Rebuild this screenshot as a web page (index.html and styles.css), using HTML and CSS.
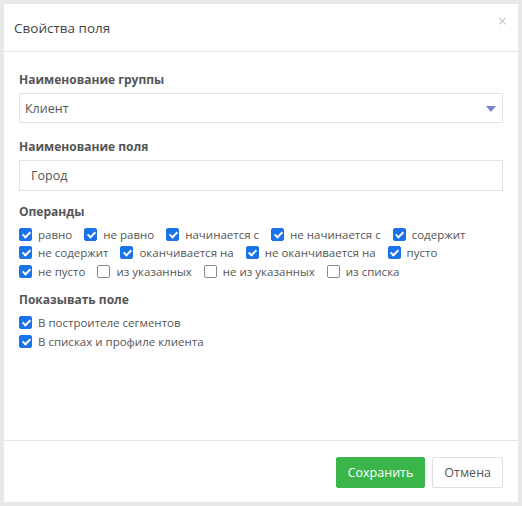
FILE: index.html
```html
<!DOCTYPE html>
<html lang="ru">
<head>
<meta charset="utf-8">
<link rel="stylesheet" href="styles.css">
</head>
<body>
<div class="dialog">
  <div class="header">
    <span class="title">Свойства поля</span>
    <span class="close">×</span>
  </div>
  <div class="body">
    <div class="label">Наименование группы</div>
    <div class="select">
      <span>Клиент</span>
      <svg class="caret" width="10" height="6" viewBox="0 0 10 6"><path d="M0 0H10L5 6Z" fill="#7b82d6"/></svg>
    </div>
    <div class="label">Наименование поля</div>
    <div class="input">Город</div>
    <div class="label">Операнды</div>
    <div class="checks">
      <label class="check"><span class="box on"></span>равно</label>
      <label class="check"><span class="box on"></span>не равно</label>
      <label class="check"><span class="box on"></span>начинается с</label>
      <label class="check"><span class="box on"></span>не начинается с</label>
      <label class="check"><span class="box on"></span>содержит</label>
      <label class="check"><span class="box on"></span>не содержит</label>
      <label class="check"><span class="box on"></span>оканчивается на</label>
      <label class="check"><span class="box on"></span>не оканчивается на</label>
      <label class="check"><span class="box on"></span>пусто</label>
      <label class="check"><span class="box on"></span>не пусто</label>
      <label class="check"><span class="box"></span>из указанных</label>
      <label class="check"><span class="box"></span>не из указанных</label>
      <label class="check"><span class="box"></span>из списка</label>
    </div>
    <div class="label show">Показывать поле</div>
    <div class="checks column">
      <label class="check"><span class="box on"></span>В построителе сегментов</label>
      <label class="check"><span class="box on"></span>В списках и профиле клиента</label>
    </div>
  </div>
  <div class="footer">
    <button class="btn save">Сохранить</button>
    <button class="btn cancel">Отмена</button>
  </div>
</div>
</body>
</html>
```
FILE: styles.css
```css
html, body {
  margin: 0;
  padding: 0;
}
body {
  background: #e8e8e8;
  font-family: "Open Sans", "Liberation Sans", sans-serif;
  color: #555;
  padding: 4px 4px 4px 4px;
  height: 506px;
  box-sizing: border-box;
}
.dialog {
  background: #fff;
  width: 514px;
  height: 498px;
  display: flex;
  flex-direction: column;
}
.header {
  height: 48px;
  border-bottom: 1px solid #e5e5e5;
  display: flex;
  align-items: center;
  justify-content: space-between;
  padding: 0 10px;
  box-sizing: border-box;
}
.title {
  font-size: 13.5px;
  color: #444;
}
.close {
  font-size: 16px;
  color: #c8c8c8;
  margin-top: -14px;
  margin-right: 1px;
}
.body {
  flex: 1;
  padding: 20px 15px 0 15px;
}
.label {
  font-size: 12px;
  font-weight: 700;
  color: #555;
  line-height: 16px;
  margin-bottom: 5px;
}
.select, .input {
  height: 30px;
  border: 1px solid #e2e2e2;
  box-sizing: border-box;
  display: flex;
  align-items: center;
  font-size: 12.5px;
  color: #555;
  margin-bottom: 16px;
}
.select {
  padding: 0 6px 0 5px;
  justify-content: space-between;
}
.input {
  padding: 0 11px;
  height: 31px;
  margin-bottom: 13px;
}
.caret {
  margin-top: 1px;
}
.checks {
  display: flex;
  flex-wrap: wrap;
  column-gap: 12px;
  padding-right: 20px;
}
.checks.column {
  flex-direction: column;
}
.check {
  display: flex;
  align-items: center;
  font-size: 11.5px;
  height: 18.5px;
  color: #555;
}
.box {
  width: 11px;
  height: 11px;
  border: 1px solid #8a8a8a;
  border-radius: 2px;
  margin-right: 6px;
  box-sizing: content-box;
  position: relative;
}
.box.on {
  background: #1a73e8;
  border-color: #1a73e8;
}
.box.on::after {
  content: "";
  position: absolute;
  left: 3.5px;
  top: 1px;
  width: 3px;
  height: 6px;
  border: solid #fff;
  border-width: 0 2px 2px 0;
  transform: rotate(45deg);
}
.label.show {
  margin-top: 11px;
  margin-bottom: 6px;
}
.footer {
  height: 61px;
  border-top: 1px solid #e5e5e5;
  display: flex;
  align-items: center;
  justify-content: flex-end;
  gap: 7px;
  padding: 0 15px;
}
.btn {
  height: 31px;
  font-family: "Open Sans", "Liberation Sans", sans-serif;
  font-size: 12.5px;
  border-radius: 2px;
  padding: 0 11px;
  margin-top: 1px;
}
.save {
  background: #3bb54a;
  border: 1px solid #3bb54a;
  color: #fff;
}
.cancel {
  background: #fff;
  border: 1px solid #e0e0e0;
  color: #555;
}
```
